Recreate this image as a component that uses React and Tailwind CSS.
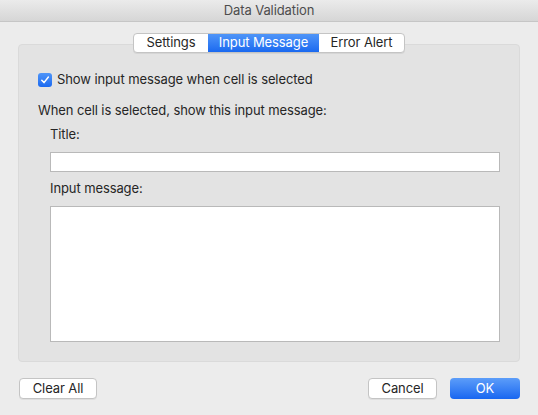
export default function App() {
  const font = { fontFamily: 'Inter, "Liberation Sans", Arial, sans-serif' };
  return (
    <div
      className="w-[538px] h-[415px] bg-[#ececec] text-[13px] tracking-[-0.1px] text-[#262626] flex flex-col overflow-hidden"
      style={font}
    >
      <div className="h-[22px] shrink-0 flex items-center justify-center border-b border-[#c6c6c6] bg-gradient-to-b from-[#ebebeb] to-[#d6d6d6] text-[#4d4d4d]">
        Data Validation
      </div>

      <div className="px-[18px] pt-[11px]">
        <div className="w-[502px] flex justify-center relative z-10">
          <div className="flex h-[20px] rounded-[4px] border border-[#c4c4c4] bg-white overflow-hidden shadow-[0_1px_0_rgba(0,0,0,0.06)]">
            <div className="w-[74px] flex items-center justify-center">Settings</div>
            <div className="w-[111px] flex items-center justify-center text-white bg-gradient-to-b from-[#4f95f8] to-[#1a69f0]">
              Input Message
            </div>
            <div className="w-[85px] flex items-center justify-center">Error Alert</div>
          </div>
        </div>

        <div className="-mt-[9px] w-[502px] rounded-[4px] bg-[#e3e3e3] border border-[#dadada] pt-[27px] pb-[19px] pl-[19px]">
          <div className="flex items-center h-[16px] gap-[5px]">
            <div className="w-[14px] h-[14px] rounded-[3px] bg-gradient-to-b from-[#4f95f8] to-[#1a69f0] flex items-center justify-center">
              <svg width="10" height="10" viewBox="0 0 10 10" fill="none">
                <path d="M1.8 5.2 L4 7.6 L8.4 2" stroke="white" strokeWidth="1.5" strokeLinecap="round" strokeLinejoin="round" />
              </svg>
            </div>
            <span>Show input message when cell is selected</span>
          </div>

          <div className="h-[16px] flex items-center mt-[15px]">When cell is selected, show this input message:</div>

          <div className="pl-[12px]">
            <div className="h-[16px] flex items-center mt-[8px]">Title:</div>
            <div className="mt-[9px] h-[20px] w-[450px] bg-white border border-[#b9b9b9]" />
            <div className="h-[16px] flex items-center mt-[9px]">Input message:</div>
            <div className="mt-[9px] h-[136px] w-[450px] bg-white border border-[#b9b9b9]" />
          </div>
        </div>

        <div className="flex items-center mt-[16px] w-[502px] pl-px">
          <button className="w-[78px] h-[21px] rounded-[4px] bg-white border border-[#c4c4c4] shadow-[0_1px_0_rgba(0,0,0,0.06)] flex items-center justify-center">
            Clear All
          </button>
          <div className="flex-1" />
          <button className="w-[69px] h-[21px] rounded-[4px] bg-white border border-[#c4c4c4] shadow-[0_1px_0_rgba(0,0,0,0.06)] flex items-center justify-center">
            Cancel
          </button>
          <button className="ml-[13px] w-[70px] h-[21px] rounded-[4px] text-white bg-gradient-to-b from-[#5c9df9] to-[#1766f0] flex items-center justify-center">
            OK
          </button>
        </div>
      </div>
    </div>
  );
}
